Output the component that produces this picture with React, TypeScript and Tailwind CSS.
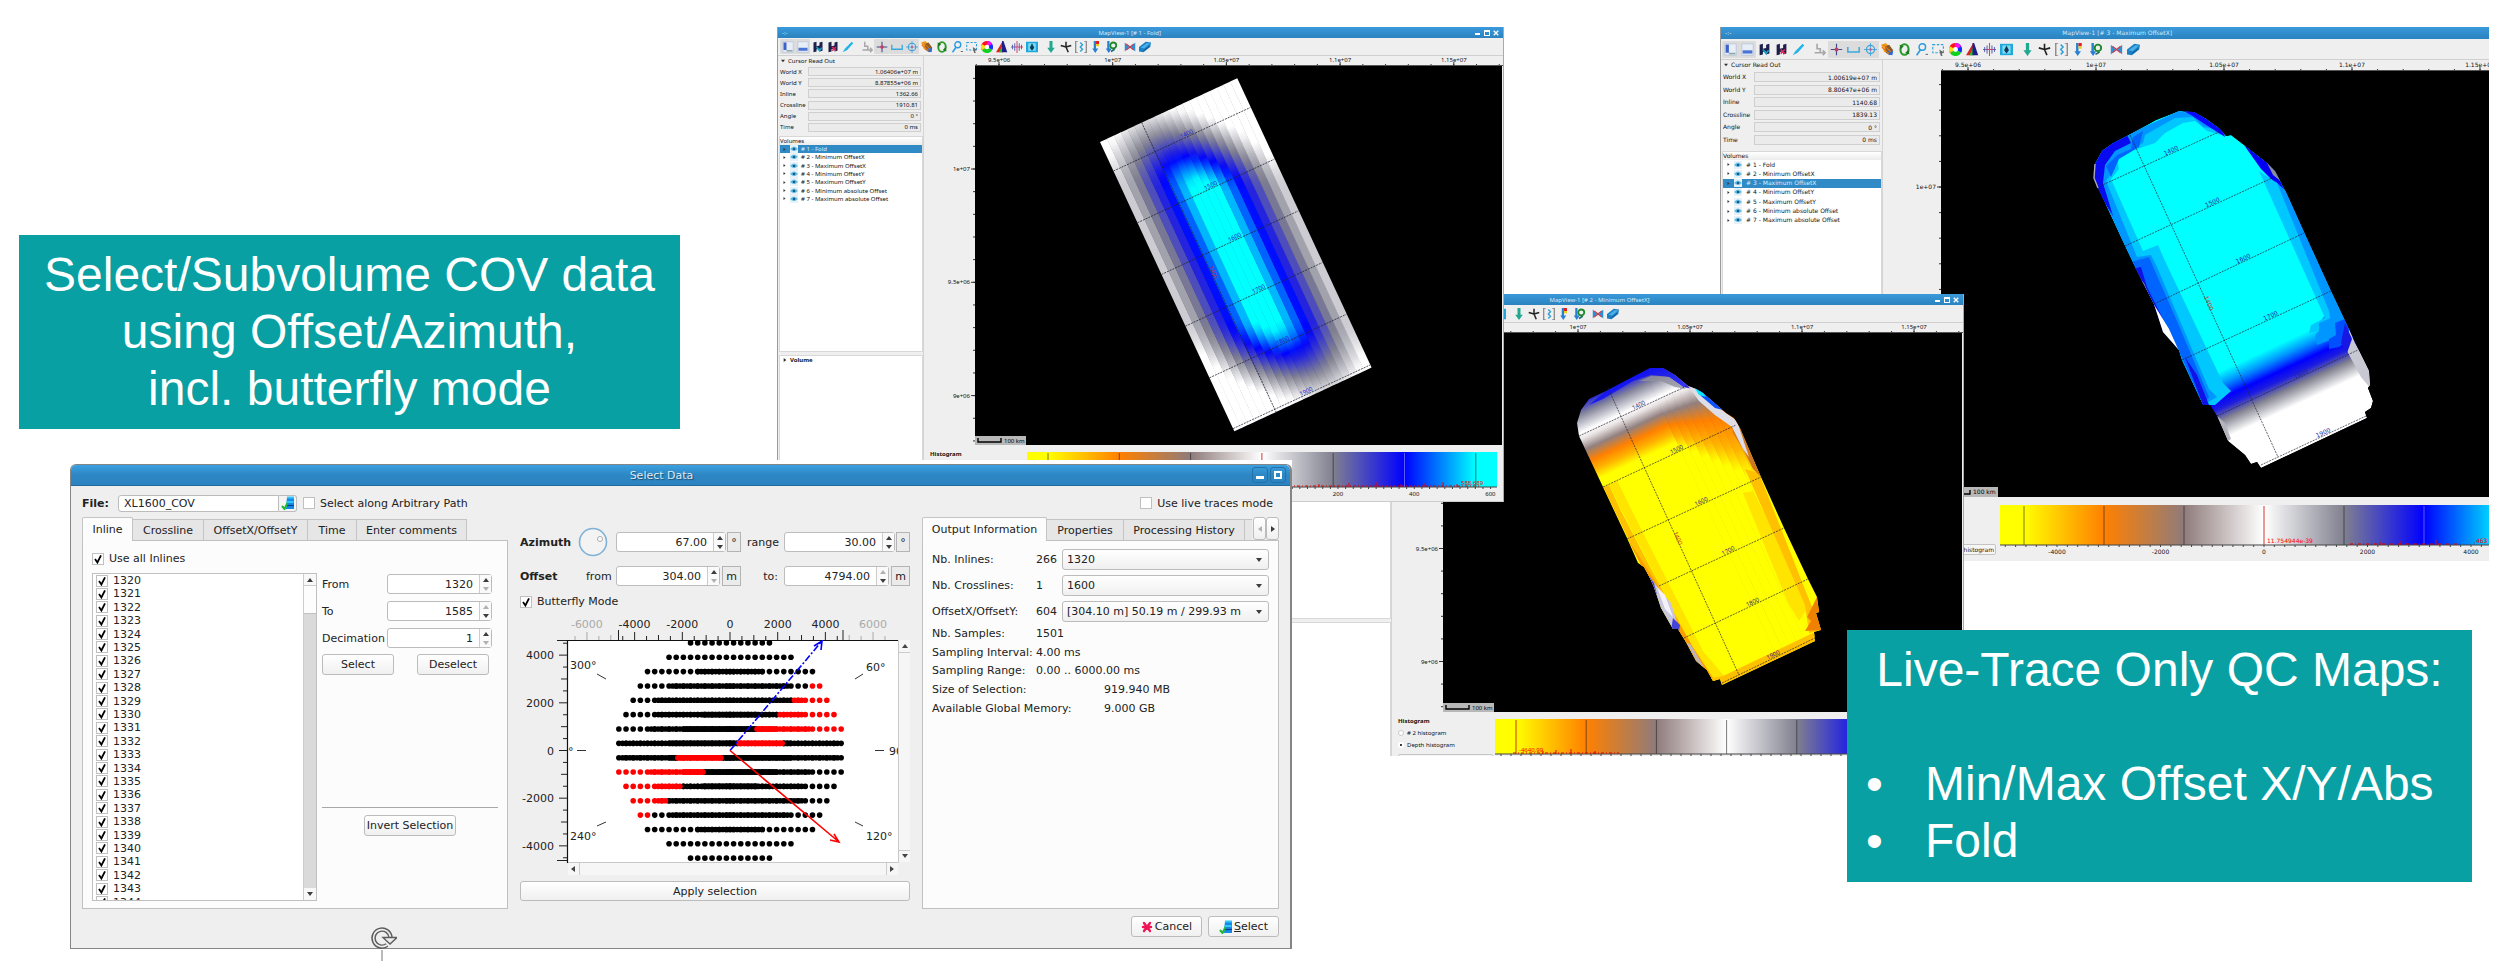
import { useId, type ReactNode } from "react";

/* ---------- colour scale shared by the maps and the histograms ---------- */

const scale = ["#ffff00", "#ff8000", "#8f7b7b", "#ffffff", "#80808f", "#0000ff", "#00ffff"];

function foldColor(value: number) {
  const stops = [
    [255, 255, 255],
    [128, 128, 143],
    [0, 0, 255],
    [0, 255, 255],
  ];
  const t = Math.max(0, Math.min(0.9999, value)) * 3;
  const i = Math.floor(t);
  const f = t - i;
  const c = stops[i].map((v, k) => Math.round(v + (stops[i + 1][k] - v) * f));
  return `rgb(${c.join(",")})`;
}

// fold falls off with the distance from a slanted segment down the middle
function foldValue(t: number, u: number) {
  const s = u - t * 36;
  const along = Math.max(0, 90 - s, s - 229) / 84;
  return 1.18 - 1.1 * Math.hypot(t, along);
}

/* ---------- toolbar ---------- */

const toolbarIcons: { name: string; pressed?: boolean; gap?: boolean; art: ReactNode }[] = [
  {
    name: "Left dock",
    pressed: true,
    art: (
      <>
        <path d="M1 1h14v14H1z" fill="#e8eef8" stroke="#b8c4d8" />
        <path d="M2 2h4v10H2z" fill="#3a62c8" />
        <path d="M6 13h8" stroke="#8aa" strokeWidth="2" />
      </>
    ),
  },
  {
    name: "Bottom dock",
    pressed: true,
    art: (
      <>
        <path d="M1 1h14v14H1z" fill="#e8eef8" stroke="#b8c4d8" />
        <path d="M2 9h12v4H2z" fill="#4a74d4" />
      </>
    ),
  },
  {
    name: "Save",
    art: (
      <>
        <path d="M2 2l4-1v6l4-1V2l4-1v12l-4 1v-4l-4 1v3l-4 1z" fill="#1c1f4a" />
        <path d="M6 8l4 5 3-4" stroke="#17a0c8" strokeWidth="2" fill="none" />
      </>
    ),
  },
  {
    name: "Save as",
    art: (
      <>
        <path d="M2 2l4-1v6l4-1V2l4-1v12l-4 1v-4l-4 1v3l-4 1z" fill="#1c1f4a" />
        <path d="M7 8l5 5M12 8l-5 5" stroke="#e0285a" strokeWidth="2" />
      </>
    ),
  },
  { name: "Edit", art: <path d="M1 15l3-5 9-9 2 2-8 9z" fill="#20b4e8" /> },
  {
    name: "Step",
    gap: true,
    art: <path d="M5 1v6h4v5h6M2 12h7M12 9l3 3-3 3" stroke="#a8a8a8" strokeWidth="2" fill="none" />,
  },
  {
    name: "Cross hair",
    pressed: true,
    art: (
      <>
        <path d="M8 1v14M1 8h14" stroke="#3a4a8a" strokeWidth="1.4" />
        <circle cx="8" cy="8" r="2.4" fill="#c83a6a" />
      </>
    ),
  },
  {
    name: "Scale bar",
    pressed: true,
    art: <path d="M1 5v6h14V5" stroke="#3aa8dc" strokeWidth="1.8" fill="none" />,
  },
  {
    name: "Target",
    pressed: true,
    art: (
      <>
        <circle cx="8" cy="8" r="5" stroke="#3aa0dc" strokeWidth="1.5" fill="none" />
        <path d="M8 0v16M0 8h16" stroke="#3aa0dc" />
        <circle cx="8" cy="8" r="1.5" fill="#c85a8a" />
      </>
    ),
  },
  {
    name: "Layers",
    art: (
      <>
        <path d="M0 2l6-2 6 6-3 6-5-1z" fill="#f0a020" />
        <path d="M5 4l5-2 5 7-4 6-5-3z" fill="#8a5a28" />
        <path d="M9 9l6 1-1 5-5-1z" fill="#2a6ad0" />
        <path d="M1 5l9 8M3 2l9 9" stroke="#e87818" strokeWidth="1.4" />
      </>
    ),
  },
  {
    name: "Refresh",
    art: (
      <>
        <ellipse cx="8" cy="8" rx="5" ry="6.5" stroke="#2a9a2a" strokeWidth="2.6" fill="none" />
        <path d="M2 2l5 2-4 4zM14 14l-5-2 4-4z" fill="#1c7a1c" />
      </>
    ),
  },
  {
    name: "Zoom",
    art: (
      <>
        <circle cx="9" cy="5" r="4" stroke="#2a9ae0" strokeWidth="1.8" fill="none" />
        <path d="M7 8l-5 7" stroke="#2a9ae0" strokeWidth="2" />
        <path d="M13 14h3" stroke="#444" />
      </>
    ),
  },
  {
    name: "Select area",
    art: (
      <>
        <path d="M1 2h13v10H1z" stroke="#2aa0d8" strokeWidth="1.4" strokeDasharray="3 2" fill="none" />
        <path d="M9 8l6 4-3 1 1 3-2 0-1-3z" fill="#666" />
      </>
    ),
  },
  {
    name: "Colours",
    art: (
      <>
        <path d="M8 8V0a8 8 0 0 1 7 12z" fill="#1030ff" />
        <path d="M8 8l7 4a8 8 0 0 1-14 0z" fill="#10d020" />
        <path d="M8 8L1 12A8 8 0 0 1 8 0z" fill="#ff1020" />
        <path d="M8 0a8 8 0 0 1 7 4L8 8z" fill="#f010f0" />
        <path d="M1 4a8 8 0 0 0 0 8l7-4z" fill="#f8e010" />
        <circle cx="8" cy="8" r="3" fill="#fff" />
      </>
    ),
  },
  {
    name: "Spectrum",
    art: (
      <>
        <path d="M0 15L9 0v15z" fill="#e02020" />
        <path d="M4 15l5-10v10z" fill="#20c020" />
        <path d="M8 15V0h2l5 15z" fill="#1c1c8a" />
      </>
    ),
  },
  {
    name: "Wavelet",
    art: (
      <>
        <path d="M8 0v16M0 8h16" stroke="#d04070" strokeWidth="1.3" />
        <path d="M2 5v6M5 3v10M11 3v10M14 5v6" stroke="#4a5ab0" strokeWidth="1.2" />
      </>
    ),
  },
  {
    name: "Snapshot",
    art: (
      <>
        <path d="M0 1h16v14H0z" fill="#20a8dc" />
        <path d="M3 3h10v10H3z" fill="#7adcf4" />
        <path d="M8 3l3 6-3 4-3-4z" fill="#103a5a" />
      </>
    ),
  },
  {
    name: "Load",
    gap: true,
    art: <path d="M6 0h4v9h3l-5 7-5-7h3z" fill="#22a890" />,
  },
  {
    name: "Axes",
    art: <path d="M8 1v7l-7-2M8 8l7-2M8 8l3 7" stroke="#222" strokeWidth="2" fill="none" />,
  },
  {
    name: "Window trace",
    art: (
      <>
        <path d="M4 0H1v16h3M12 0h3v16h-3" stroke="#444" fill="none" />
        <path d="M7 2l3 3-3 3 3 3-3 3" stroke="#2aa0d8" strokeWidth="1.8" fill="none" />
      </>
    ),
  },
  {
    name: "Colour arrow",
    art: (
      <>
        <path d="M5 0h3v10h3l-4 6-4-6h2z" fill="#2a80d0" />
        <path d="M8 0h4v4H8z" fill="#e02020" />
        <path d="M8 4h4v3H8z" fill="#e8d020" />
      </>
    ),
  },
  {
    name: "Apply arrow",
    art: (
      <>
        <path d="M3 0h3v10h3l-4 6-4-6h2z" fill="#2a80d0" />
        <circle cx="11" cy="6" r="4" stroke="#1c8a2a" strokeWidth="2.4" fill="none" />
        <path d="M8 14l5-3" stroke="#1c6a6a" strokeWidth="2" />
      </>
    ),
  },
  {
    name: "Mirror",
    gap: true,
    art: (
      <>
        <path d="M1 2l6 6-6 6zM15 2L9 8l6 6z" fill="#2a90d8" />
        <path d="M3 4l10 8M13 4L3 12" stroke="#c83a4a" strokeWidth="1.4" />
      </>
    ),
  },
  {
    name: "Volume",
    art: (
      <>
        <path d="M0 8l9-7 7 1-1 6-9 7-6-1z" fill="#1c80c4" />
        <path d="M2 9l8-6 5 0-8 7z" fill="#4ab0e8" />
        <path d="M6 13l8-6" stroke="#0c4a80" />
      </>
    ),
  },
];

function Toolbar({ large }: { large?: boolean }) {
  return (
    <div
      className={`flex items-center border-b border-[#d0d0d0] bg-[#efefef] ${large ? "h-[21px] pl-px" : "h-[18px] pl-[2px]"}`}
    >
      {toolbarIcons.map(({ name, pressed, gap, art }) => (
        <button
          key={name}
          type="button"
          aria-label={name}
          className={`flex shrink-0 items-center justify-center rounded-[1px] ${large ? "h-[17px] w-[17px]" : "h-[15px] w-[15px]"} ${gap ? "ml-1" : ""} ${pressed ? "bg-[#dcdcdc]" : ""}`}
        >
          <svg viewBox="0 0 16 16" className={large ? "size-[13px]" : "size-[12px]"}>
            {art}
          </svg>
        </button>
      ))}
    </div>
  );
}

/* ---------- map window ---------- */

const volumes = [
  "# 1 - Fold",
  "# 2 - Minimum OffsetX",
  "# 3 - Maximum OffsetX",
  "# 4 - Minimum OffsetY",
  "# 5 - Maximum OffsetY",
  "# 6 - Minimum absolute Offset",
  "# 7 - Maximum absolute Offset",
];

type Axis = { first: number; step: number; labels: string[] };

type MapWindowProps = {
  className: string;
  title: string;
  titleClass: string;
  readout: string[];
  selected: number;
  large?: boolean;
  buttons?: boolean;
  xAxis: Axis;
  yAxis: Axis;
  bar: { first: number; step: number; width: number; red: number; tick: number; axis: Axis; notes: { x: number; text: string }[]; spikes: number[] };
  sources?: string[];
  children: ReactNode;
};

function Ruler({ axis, height }: { axis: Axis; height: number }) {
  const ticks = Array.from({ length: 40 }, (_, i) => axis.first + ((i - 10) * axis.step) / 5).filter((x) => x > 0);
  return (
    <svg className="h-full w-full overflow-hidden">
      {ticks.map((x) => (
        <path key={x} d={`M${x} ${height - 2}V${height}`} stroke="#333" />
      ))}
      <path d={`M0 ${height - 0.5}H900`} stroke="#555" />
      {axis.labels.map((text, i) => (
        <g key={text}>
          <path d={`M${axis.first + i * axis.step} ${height - 4}V${height}`} stroke="#333" />
          <text x={axis.first + i * axis.step} y={height - 4} textAnchor="middle" fill="#111">
            {text}
          </text>
        </g>
      ))}
    </svg>
  );
}

function SideRuler({ axis, width }: { axis: Axis; width: number }) {
  const ticks = Array.from({ length: 30 }, (_, i) => axis.first + ((i - 15) * axis.step) / 5).filter((y) => y > 0);
  return (
    <svg className="h-full w-full overflow-hidden">
      {ticks.map((y) => (
        <path key={y} d={`M${width - 2} ${y}H${width}`} stroke="#333" />
      ))}
      {axis.labels.map((text, i) => (
        <g key={text}>
          <path d={`M${width - 4} ${axis.first + i * axis.step}H${width}`} stroke="#333" />
          <text x={width - 5} y={axis.first + i * axis.step + 2} textAnchor="end" fill="#111">
            {text}
          </text>
        </g>
      ))}
    </svg>
  );
}

function ColorBar({ bar, height }: { bar: MapWindowProps["bar"]; height: number }) {
  const id = useId();
  const lines = [0, 1, 2, 3, 4, 5, 6].map((i) => bar.first + i * bar.step);
  const ticks = Array.from({ length: 80 }, (_, i) => bar.axis.first + (i - 10) * bar.tick).filter(
    (x) => x > 0 && x < bar.width,
  );
  return (
    <svg className="h-full w-full overflow-hidden">
      <linearGradient id={id} gradientUnits="userSpaceOnUse" x1={lines[0]} x2={lines[6]} y1="0" y2="0">
        {scale.map((color, i) => (
          <stop key={color} offset={i / 6} stopColor={color} />
        ))}
      </linearGradient>
      <rect width={bar.width} height={height} fill={`url(#${id})`} />
      {lines.map((x, i) => (
        <path
          key={x}
          d={`M${x} 1V${height}`}
          stroke={i === bar.red ? "#c00" : i === 5 ? "#99f" : "#222"}
          strokeOpacity={i === bar.red ? 0.8 : 0.6}
        />
      ))}
      <path d={`M0 ${height}H${bar.width}`} stroke="#444" />
      <path d={bar.spikes.map((x, i) => `M${x} ${height}v${-3 - (i % 3)}`).join("")} stroke="#e00" fill="none" />
      <path
        d={`M${bar.spikes[0] - 30} ${height - 1}H${bar.spikes[bar.spikes.length - 1] + 24}`}
        stroke="#d00"
        strokeDasharray="3 2 1 2"
      />
      {ticks.map((x) => (
        <path key={x} d={`M${x} ${height}v2`} stroke="#444" />
      ))}
      {bar.axis.labels.map((text, i) => (
        <text key={text} x={bar.axis.first + i * bar.axis.step} y={height + 9} textAnchor="middle" fill="#111">
          {text}
        </text>
      ))}
      {bar.notes.map(({ x, text }) => (
        <text key={text} x={x} y={height - 2} fill="#f00">
          {text}
        </text>
      ))}
    </svg>
  );
}

function ScaleBar({ large }: { large?: boolean }) {
  return (
    <div
      className={`absolute bottom-0 left-0 flex items-center gap-[2px] bg-[#b8b8b8] pl-[2px] whitespace-nowrap text-black ${large ? "h-[10px] w-[57px]" : "h-[9px] w-[51px]"}`}
    >
      <svg className={`h-[5px] shrink-0 ${large ? "w-[28px]" : "w-[25px]"}`}>
        <path d={large ? "M1 0v4h26V0" : "M1 0v4h23V0"} stroke="#000" strokeWidth="1.4" fill="none" />
      </svg>
      100 km
    </div>
  );
}

function MapWindow(props: MapWindowProps) {
  const { large } = props;
  const fields = ["World X", "World Y", "Inline", "Crossline", "Angle", "Time"];
  return (
    <section
      className={`absolute flex flex-col overflow-hidden border-l border-[#9a9a9a] bg-[#efefef] leading-none text-[#111] ${large ? "font-['DejaVu_Sans',sans-serif] text-[6px]" : "font-['Noto_Sans',sans-serif] text-[6px]"} ${props.className}`}
    >
      <header
        className={`relative flex shrink-0 items-center bg-gradient-to-b from-[#3a9adb] to-[#2b82bf] text-[#d6e8f6] ${large ? "h-[12px]" : "h-[11px]"}`}
      >
        <span className="pl-1">-:-</span>
        <h2 className={`whitespace-nowrap ${props.titleClass}`}>{props.title}</h2>
        {props.buttons && (
          <div className="ml-auto flex gap-[2px] pr-[3px]">
            <button type="button" aria-label="Minimise" className="flex size-[7px] items-end pb-px">
              <span className="h-[2px] w-[5px] bg-white" />
            </button>
            <button type="button" aria-label="Maximise" className="size-[7px]">
              <span className="block size-[6px] border border-t-2 border-white" />
            </button>
            <button type="button" aria-label="Close" className="size-[7px]">
              <svg viewBox="0 0 8 8" className="size-[6px]">
                <path d="M1 1l6 6M7 1L1 7" stroke="#fff" strokeWidth="1.8" />
              </svg>
            </button>
          </div>
        )}
      </header>
      <Toolbar large={large} />
      <div className="flex min-h-0 flex-1">
        <aside className={`flex shrink-0 flex-col border-r border-[#d4d4d4] ${large ? "w-[162px]" : "w-[146px]"}`}>
          <h3 className="flex h-[10px] items-center gap-[3px] pl-[3px]">
            <svg viewBox="0 0 6 6" className="size-[4px]">
              <path d="M0 1h6L3 5z" fill="#333" />
            </svg>
            Cursor Read Out
          </h3>
          <div
            className={`flex shrink-0 flex-col justify-between pr-[2px] pl-[2px] ${large ? "mt-[2px] h-[73px]" : "mt-px h-[65px]"}`}
          >
            {fields.map((field, i) => (
              <label key={field} className="flex items-center">
                <span className={large ? "w-[31px]" : "w-[28px]"}>{field}</span>
                <input
                  readOnly
                  value={props.readout[i]}
                  className={`min-w-0 flex-1 border border-[#cfcfcf] bg-[#ebebeb] pr-[2px] text-right ${large ? "h-[10px]" : "h-[9px]"}`}
                />
              </label>
            ))}
          </div>
          <div
            className={`ml-px shrink-0 border border-[#d8d8d8] bg-white ${large ? "mt-[6px] h-[240px]" : "mt-[4px] h-[216px]"}`}
          >
            <h3 className="flex h-[8px] items-center bg-gradient-to-b from-white to-[#ececec]">Volumes</h3>
            <ul className={`grid auto-rows-fr ${large ? "h-[65px]" : "h-[58px]"}`}>
              {volumes.map((volume, i) => (
                <li
                  key={volume}
                  className={`flex items-center whitespace-nowrap ${i === props.selected ? "bg-[#2f8ac6] text-[#dfeefa]" : ""}`}
                >
                  <svg viewBox="0 0 6 6" className={`size-[3px] ${large ? "ml-[4px]" : "ml-[3px]"}`}>
                    <path d="M1 0v6l4-3z" fill="#333" />
                  </svg>
                  <svg viewBox="0 0 8 8" className={`ml-[4px] size-[8px] ${large ? "mr-[4px]" : "mr-[3px]"}`}>
                    <path d="M0 0h8v8H0z" fill="#e6f1f8" />
                    <path d="M0 4q4-5 8 0q-4 4-8 0z" fill="#63bfe6" />
                    <circle cx="4" cy="4" r="1.3" fill="#175a86" />
                  </svg>
                  {volume}
                </li>
              ))}
            </ul>
          </div>
          <div className="mt-[3px] ml-px min-h-0 flex-1 border border-b-0 border-[#d8d8d8] bg-white">
            <h3 className="flex items-center gap-[3px] pt-px pl-[3px] font-bold">
              <svg viewBox="0 0 6 6" className="size-[4px]">
                <path d="M1 0v6l4-3z" fill="#333" />
              </svg>
              Volume
            </h3>
          </div>
        </aside>
        <div className="flex min-w-0 flex-1 flex-col">
          <div className={`shrink-0 ${large ? "h-[11px] pl-[58px]" : "h-[10px] pl-[51px]"}`}>
            <Ruler axis={props.xAxis} height={large ? 11 : 10} />
          </div>
          <div className={`flex shrink-0 ${large ? "h-[426px]" : "h-[379px]"}`}>
            <div className={`shrink-0 ${large ? "w-[58px]" : "w-[51px]"}`}>
              <SideRuler axis={props.yAxis} width={large ? 58 : 51} />
            </div>
            <div className={`relative min-w-0 flex-1 bg-black ${large ? "" : "mr-px"}`}>
              <svg className="h-full w-full overflow-hidden">{props.children}</svg>
              <ScaleBar large={large} />
            </div>
          </div>
          <div className="flex min-h-0 flex-1 overflow-hidden">
            <fieldset
              className={`flex shrink-0 flex-col pl-[6px] ${large ? "w-[117px] gap-[6px] pt-[8px] pr-[4px]" : "w-[103px] gap-[6px] pt-[6px] pr-[2px]"}`}
            >
              <legend className="sr-only">Histogram source</legend>
              <strong>Histogram</strong>
              {props.sources?.map((name, i) => (
                <label key={name} className="flex items-center gap-[3px]">
                  <input
                    type="radio"
                    name={props.title}
                    defaultChecked={i === 1}
                    className="size-[6px] appearance-none rounded-full border border-[#ccc] bg-white checked:border-2 checked:border-white checked:bg-black"
                  />
                  {name}
                </label>
              ))}
              {!props.sources && large && (
                <button
                  type="button"
                  className="mt-[27px] h-[11px] shrink-0 rounded-[2px] border border-[#c4c4c4] bg-[#f6f6f6] pr-px text-right whitespace-nowrap"
                >
                  Volume specific histogram
                </button>
              )}
              {props.sources && (
                <button
                  type="button"
                  className="h-[11px] shrink-0 rounded-[2px] border border-[#c4c4c4] bg-[#f6f6f6] whitespace-nowrap"
                >
                  Set as Volume specific histogram
                </button>
              )}
            </fieldset>
            <div className={`min-w-0 flex-1 ${large ? "pt-[8px]" : "pt-[7px]"}`}>
              <ColorBar bar={props.bar} height={large ? 40 : 35} />
            </div>
          </div>
        </div>
      </div>
    </section>
  );
}

/* ---------- the three maps ---------- */

const inlineNames = ["1400", "1500", "1600", "1700", "1800", "1900"];

function FoldMap() {
  const cols = Array.from({ length: 20 }, (_, i) => i);
  const rows = Array.from({ length: 40 }, (_, i) => i / 39);
  const lines = [32, 89, 146, 203, 260, 316];
  return (
    <g transform="translate(125 76) rotate(-24.9)">
      {cols.map((c) => (
        <g key={c}>
          <linearGradient id={`fold-${c}`} x1="0" x2="0" y1="0" y2="1">
            {rows.map((r) => (
              <stop key={r} offset={r} stopColor={foldColor(foldValue((c + 0.5) / 10 - 1, r * 319))} />
            ))}
          </linearGradient>
          <rect x={c * 7.55} width="7.9" height="319" fill={`url(#fold-${c})`} />
        </g>
      ))}
      <g stroke="#223" strokeWidth="0.7" strokeDasharray="2 1">
        {lines.map((y) => (
          <path key={y} d={`M0 ${y}H151`} />
        ))}
        <path d="M46 0V319" />
      </g>
      {lines.map((y, i) => (
        <text key={y} x="82" y={y - 1} textAnchor="middle" fill="#22c">
          {inlineNames[i]}
        </text>
      ))}
      <text transform="translate(46 166) rotate(90)" textAnchor="middle" fill="#c02040">
        1400
      </text>
    </g>
  );
}

type GridProps = { lines: number[][]; long: string; red: number[]; color: string; at: number };

function MapGrid({ lines, long, red, color, at }: GridProps) {
  return (
    <>
      <g stroke="#223" strokeWidth="0.7" strokeDasharray="2 1">
        {lines.map(([x1, y1, x2, y2]) => (
          <path key={y1} d={`M${x1} ${y1}L${x2} ${y2}`} />
        ))}
        <path d={long} />
      </g>
      {lines.map(([x1, y1, x2, y2], i) => (
        <text
          key={y1}
          transform={`translate(${x1 + (x2 - x1) * at} ${y1 + (y2 - y1) * at - 1}) rotate(-25)`}
          textAnchor="middle"
          fill={color}
        >
          {inlineNames[i]}
        </text>
      ))}
      <text transform={`translate(${red[0]} ${red[1]}) rotate(66)`} textAnchor="middle" fill="#d03018">
        1400
      </text>
    </>
  );
}

// columns run along the inline direction; the yellow onset steps down to the right
const minimumColumns = [0, 8, 16, 25, 34, 43, 52, 61, 70, 79];

function MinimumMap() {
  const outline =
    "M207 35L220 35L232 42L245 53L253 56L260 60L274 72L283 80L291 85L297 95L318 144L341 195L365 246L374 264L376 279L373 280L378 297L371 299L372 308L279 352L277 346L270 348L264 337L253 328L243 309L235 296L230 296L218 275L211 254L207 245L201 234L195 230L184 205L160 154L136 103L134 90L138 77L146 66L163 58Z";
  const stopsFor = (shift: number): [number, string][] => [
    [-38, "#0000ff"],
    [-30, "#2424dc"],
    [-19, "#83839a"],
    [-2, "#ffffff"],
    [4, "#eae4e4"],
    [15 + shift * 0.1, "#928080"],
    [27 + shift * 0.3, "#ff8000"],
    [37 + shift * 0.7, "#ffb400"],
    [47 + shift, "#ffff00"],
  ];
  return (
    <>
      <clipPath id="min-clip">
        <path d={outline} />
      </clipPath>
      <g clipPath="url(#min-clip)">
        <g transform="translate(136 103) rotate(-25)">
          {minimumColumns.map((shift, i) => {
            const x = i === 0 ? -20 : 78 + i * 8;
            return (
              <g key={shift}>
                <linearGradient id={`min-${i}`} gradientUnits="userSpaceOnUse" x1="0" x2="0" y1="-38" y2="132">
                  {stopsFor(shift).map(([u, color]) => (
                    <stop key={color} offset={(u + 38) / 170} stopColor={color} />
                  ))}
                </linearGradient>
                <rect x={x} y="-60" width={i === 0 ? 106.5 : 8.5} height="360" fill={`url(#min-${i})`} />
              </g>
            );
          })}
        </g>
        <path d="M146 72L163 58L207 35L222 34L250 56L240 54L226 44L208 42L190 48L160 66Z" fill="#1010f4" fillOpacity="0.85" />
        <path d="M208 43L226 44L243 56L232 54L218 48L196 48Z" fill="#90909e" fillOpacity="0.8" />
        <path d="M300 160L310 158L368 270L356 288L345 270Z" fill="#ffe400" />
        <path d="M302 136L316 140L378 297L366 300L362 272Z" fill="#ffc000" />
        <path d="M160 154L166 152L178 178L206 232L252 318L270 348L240 310L200 236Z" fill="#ffc000" />
        <path d="M166 152L174 147L190 180L260 318L282 344L268 346L236 288L190 200Z" fill="#ffe400" />
        <path d="M184 205L190 214L212 248L236 290L250 314L272 348L264 346L230 290L200 236Z" fill="#ff9c00" />
        <path d="M264 346L280 343L372 299L378 306L279 352Z" fill="#ffc000" />
        <path d="M378 297L362 298L368 288L364 284L370 272L374 264L378 280Z" fill="#f08000" />
        <path d="M288 84L297 95L318 144L310 136L300 116L290 100Z" fill="#d07820" />
        <path d="M243 50L260 60L280 78L294 88L306 124L300 116L289 94L272 82L256 68Z" fill="#dedee8" />
        <path d="M253 54L262 60L280 77L272 75L258 63Z" fill="#0a50ff" />
        <path d="M251 54L259 58L263 64L256 62Z" fill="#00e8ff" />
        <path d="M206 243L216 256L228 270L236 296L228 298L216 274Z" fill="#c9c7dd" />
        <path d="M214 254L222 262L230 284L222 276Z" fill="#f4f2f8" />
        <path d="M230 285L237 292L236 298L228 297Z" fill="#4444d8" />
        <path d="M206 243L211 250L214 262L208 254Z" fill="#3c3ce0" />
        <path d="M243 309L248 312L262 336L254 329Z" fill="#bdb4bb" />
      </g>
      <MapGrid
        lines={[
          [136, 103, 244, 53],
          [160, 154, 293, 92],
          [184, 206, 318, 144],
          [216, 253, 341, 195],
          [241, 305, 365, 246],
          [279, 350, 372, 305],
        ]}
        long="M165 55L296 342"
        red={[233, 206]}
        color="#332a70"
        at={0.56}
      />
    </>
  );
}

function MaximumMap() {
  const outline =
    "M238 40L253 41L264 47L278 57L285 65L290 64L307 77L325 91L334 100L345 121L363 161L390 220L416 275L428 300L429 314L427 317L432 330L430 337L424 341L426 347L320 397L316 391L310 393L304 384L287 370L276 345L269 334L262 334L241 289L238 279L222 261L213 233L195 198L184 175L157 117L153 107L154 93L161 80L172 72L186 65L215 49Z";
  return (
    <>
      <linearGradient id="max-fill" gradientUnits="userSpaceOnUse" x1="163.8" y1="353.7" x2="197.4" y2="426.3">
        <stop offset="0" stopColor="#00ffff" />
        <stop offset="0.08" stopColor="#00c8ff" />
        <stop offset="0.15" stopColor="#0096ff" />
        <stop offset="0.23" stopColor="#0050ff" />
        <stop offset="0.31" stopColor="#0000ff" />
        <stop offset="0.42" stopColor="#1c1ce0" />
        <stop offset="0.56" stopColor="#80808f" />
        <stop offset="0.78" stopColor="#ffffff" />
      </linearGradient>
      <clipPath id="max-clip">
        <path d={outline} />
      </clipPath>
      <g clipPath="url(#max-clip)">
        <path d={outline} fill="url(#max-fill)" />
        <path d="M153 107L153 93L162 78L190 62L238 40L262 46L284 62L280 64L266 60L254 50L242 52L224 62L214 72L190 80L176 88L178 98L170 108L202 180L217 174L224 190L282 312L290 320L274 334L262 334L184 175Z" fill="#00c8ff" />
        <path d="M153 107L153 93L162 78L190 62L238 40L262 46L276 58L262 56L252 46L234 47L204 64L202 72L172 88L174 98L165 110L196 186L210 184L216 196L268 318L276 326L262 334L184 175Z" fill="#0096ff" />
        <path d="M186 192L208 186L214 200L236 250L268 326L262 334L238 280Z" fill="#0064ff" />
        <path d="M150 110L152 90L166 74L186 64L190 72L174 80L164 94L162 112L172 145Z" fill="#0a0af0" />
        <path d="M165 95L176 84L190 78L192 66L202 60L198 76L178 88L170 106Z" fill="#0064ff" />
        <path d="M238 38L254 40L282 60L284 66L262 52L250 44Z" fill="#0808ff" />
        <path d="M192 198L200 196L206 216L240 284L238 280L222 261Z" fill="#1010e8" />
        <path d="M196 204L201 210L212 232L228 258L238 280L222 263L210 236Z" fill="#fff" />
        <path d="M198 208L203 212L214 238L208 232Z" fill="#8a86a0" />
        <path d="M303 74L325 91L334 100L348 128L338 116L320 98Z" fill="#0000f4" />
        <path d="M324 88L336 102L342 112L332 104Z" fill="#8c8c9c" />
        <path d="M334 110L346 121L402 242L406 254L394 250L390 256L378 252L384 244Z" fill="#0096ff" />
        <path d="M318 100L336 112L388 240L390 250L378 252L378 260L368 262L370 254L384 247Z" fill="#00c8ff" />
        <path d="M378 252L392 246L404 252L406 262L392 268L376 274L374 264L378 260Z" fill="#0096ff" />
        <path d="M394 252L404 248L412 266L398 276L388 278L388 268L395 264Z" fill="#0050ff" />
        <path d="M408 258L414 272L430 302L430 318L420 306L406 280Z" fill="#c8c8d2" />
        <path d="M404 252L411 268L406 282L400 272Z" fill="#1818e4" />
        <path d="M262 334L268 334L256 304L244 286Z" fill="#1010e8" />
        <path d="M276 345L284 352L290 368L287 370Z" fill="#b4b4be" />
      </g>
      <path d="M154 93L153 107L157 117" stroke="#a8a8b8" strokeWidth="1.4" fill="none" />
      <MapGrid
        lines={[
          [157, 116, 280, 60],
          [184, 175, 331, 107],
          [213, 233, 363, 162],
          [241, 289, 390, 220],
          [276, 345, 417, 279],
          [320, 394, 425, 345],
        ]}
        long="M189 64L337 386"
        red={[266, 233]}
        color="#2222a8"
        at={0.6}
      />
    </>
  );
}

/* ---------- dialog controls ---------- */

function Check({ children, checked, className = "" }: { children: ReactNode; checked?: boolean; className?: string }) {
  return (
    <label className={`flex items-center gap-[5px] ${className}`}>
      <span className="grid size-[12px] shrink-0 place-items-center">
        <input
          type="checkbox"
          defaultChecked={checked}
          className="peer col-start-1 row-start-1 size-[12px] appearance-none border border-[#c0c0c0] bg-white"
        />
        <svg viewBox="0 0 12 12" className="pointer-events-none invisible col-start-1 row-start-1 size-[12px] peer-checked:visible">
          <path d="M3 6l2.4 3.4L9 2.4" stroke="#000" strokeWidth="1.8" fill="none" />
        </svg>
      </span>
      {children}
    </label>
  );
}

function Arrow({ dir, off }: { dir: "up" | "down" | "left" | "right"; off?: boolean }) {
  const d = { up: "M0 5h6L3 1z", down: "M0 1h6L3 5z", left: "M5 0v6L1 3z", right: "M1 0v6l4-3z" }[dir];
  return (
    <svg viewBox="0 0 6 6" className="size-[6px]">
      <path d={d} fill={off ? "#b0b0b0" : "#3c3c3c"} />
    </svg>
  );
}

function Spin({ id, label, value, upOff, downOff }: { id?: string; label?: string; value: string; upOff?: boolean; downOff?: boolean }) {
  return (
    <div className="flex h-5 min-w-0 flex-1 rounded-[3px] border border-[#bcbcbc] bg-white">
      <input id={id} aria-label={label} defaultValue={value} className="min-w-0 flex-1 bg-transparent pr-[6px] text-right" />
      <div className="flex w-[12px] flex-col border-l border-[#ccc] bg-[#fafafa]">
        <button type="button" aria-label="Increase" className="flex flex-1 items-center justify-center">
          <Arrow dir="up" off={upOff} />
        </button>
        <button type="button" aria-label="Decrease" className="flex flex-1 items-center justify-center">
          <Arrow dir="down" off={downOff} />
        </button>
      </div>
    </div>
  );
}

function Unit({ children, className }: { children: ReactNode; className: string }) {
  return (
    <span className={`flex h-5 items-center justify-center border border-[#b4b4b4] bg-[#ebebeb] ${className}`}>
      {children}
    </span>
  );
}

const buttonClass =
  "flex items-center justify-center rounded-[3px] border border-[#bcbcbc] bg-gradient-to-b from-white to-[#f0f0f0] whitespace-nowrap";

function DatabaseIcon() {
  return (
    <svg viewBox="0 0 14 14" className="size-[14px] shrink-0">
      <path d="M6 1h7v12H5z" fill="#1489e8" />
      <path d="M6 1.500h7M5.500 6h7" stroke="#33c8f8" strokeWidth="1.8" />
      <path d="M6 9.500h7" stroke="#0a3c9a" strokeWidth="1.2" />
      <path d="M1 10l2.500 3 3-6" stroke="#1fb82f" strokeWidth="2" fill="none" />
    </svg>
  );
}

function Tabs({ names, widths }: { names: string[]; widths: string[] }) {
  return (
    <div role="tablist" className="flex h-[24px] items-end">
      {names.map((name, i) => (
        <button
          key={name}
          type="button"
          role="tab"
          aria-selected={i === 0}
          className={`border border-[#c4c4c4] whitespace-nowrap ${widths[i]} ${i === 0 ? "z-10 h-[24px] rounded-t-[2px] border-b-0 bg-[#fcfcfc]" : "h-[22px] border-l-0 bg-[#e6e6e6]"}`}
        >
          {name}
        </button>
      ))}
    </div>
  );
}

/* ---------- offset / azimuth plot ---------- */

const dotRows = [
  { extent: 115, dense: 115, core: 60 },
  { extent: 115, dense: 84, core: 46 },
  { extent: 108, dense: 77, core: 28 },
  { extent: 101, dense: 77, core: 0 },
  { extent: 94, dense: 63, core: 0 },
  { extent: 87, dense: 34, core: 0 },
  { extent: 65, dense: 0, core: 0 },
  { extent: 44, dense: 0, core: 0 },
];

// start and end of the selected part of each row, mirrored for the lower half
const selectedRanges = [
  [9, 53],
  [26, 200],
  [48, 200],
  [62, 200],
  [80, 200],
];

function rowDots({ extent, dense, core }: (typeof dotRows)[number]) {
  const xs: number[] = [];
  for (let x = 3.6; x <= extent; x += 7.17) xs.push(x);
  for (let x = 0; x < dense * 0.95; x += 3.58) xs.push(x);
  for (let x = 0; x < core; x += 1.8) xs.push(x);
  return xs.flatMap((x) => [x, -x]);
}

function OffsetPlot() {
  const cx = 210;
  const cy = 142.5;
  const xTicks = Array.from({ length: 27 }, (_, i) => i - 13);
  const yTicks = Array.from({ length: 19 }, (_, i) => i - 9);
  return (
    <svg viewBox="0 0 390 268" className="h-[268px] w-full" fontSize="11" fill="#222">
      {xTicks.map((i) => (
        <path
          key={i}
          d={`M${cx + i * 11.92} ${i % 4 === 0 ? 24 : i % 2 === 0 ? 27 : 28}V32`}
          stroke={Math.abs(i) > 9 ? "#aaa" : "#222"}
        />
      ))}
      <path d="M98.500 22V32M323 22V32" stroke="#222" />
      {yTicks.map((i) => (
        <path key={i} d={`M${i % 4 === 0 ? 39 : i % 2 === 0 ? 41 : 43} ${cy + i * 11.92}H47`} stroke="#222" />
      ))}
      <path d="M37 32.500H47M37 252.500H47" stroke="#222" />
      {[-6000, -4000, -2000, 0, 2000, 4000, 6000].map((v) => (
        <text key={v} x={cx + v * 0.02385} y="20" textAnchor="middle" fill={Math.abs(v) > 5000 ? "#aaa" : "#222"}>
          {v}
        </text>
      ))}
      {[4000, 2000, 0, -2000, -4000].map((v) => (
        <text key={v} x="34" y={cy - v * 0.02385 + 4} textAnchor="end">
          {v}
        </text>
      ))}
      <clipPath id="plot-clip">
        <path d="M48 32H378V254H48z" />
      </clipPath>
      <path d="M47.500 32.500H378.500V254.500H47.500z" fill="#fff" stroke="#c8c8c8" />
      <path d="M47.500 255V32.500H378" fill="none" stroke="#111" strokeWidth="1.2" />
      <g clipPath="url(#plot-clip)">
        {dotRows.flatMap((row, r) =>
          [-1, 1].flatMap((side) =>
            rowDots(row)
              .map((x) => {
                const range = selectedRanges[r];
                const d = -side * x;
                return { x, red: range !== undefined && d >= range[0] && d <= range[1] };
              })
              .sort((a, b) => Number(a.red) - Number(b.red))
              .map(({ x, red }, i) => (
                <circle
                  key={`${r}${side}${i}`}
                  cx={cx + x}
                  cy={cy + side * (r + 0.5) * 14.35}
                  r="2.8"
                  fill={red ? "#f00" : "#000"}
                />
              )),
          ),
        )}
        <g stroke="#00f" strokeWidth="1.6" fill="none">
          <path d={`M${cx} ${cy}L302 33`} strokeDasharray="7 2 2 2" />
          <path d="M301 42L302 33L294 38" />
        </g>
        <path d={`M${cx} ${cy}L319 234M314 226L319 234L310 232`} stroke="#f00" strokeWidth="1.6" fill="none" />
        <path
          d="M77 66L86 71M335 71L343 66M77 218L86 214M335 214L343 218M57 142.500H66M355 142.500H364"
          stroke="#333"
          fill="none"
        />
        <text x="50" y="61">300°</text>
        <text x="346" y="63">60°</text>
        <text x="50" y="232">240°</text>
        <text x="346" y="232">120°</text>
        <text x="48" y="147">°</text>
        <text x="369" y="147">90°</text>
      </g>
      <path d="M379 32h12v222h-12zM48 255h330v12H48z" fill="#f6f6f6" />
      <path d="M379 44.500h11M379 242.500h11M59.500 255v12M366.500 255v12" stroke="#ccc" />
      <path d="M382 40h6l-3-4zM382 246h6l-3 4zM55 258v6l-4-3zM370 258v6l4-3z" fill="#444" />
    </svg>
  );
}

/* ---------- dialog ---------- */

const inlines = Array.from({ length: 25 }, (_, i) => 1320 + i);

function InlinePanel() {
  return (
    <div className="flex w-[426px] shrink-0 flex-col">
      <Tabs
        names={["Inline", "Crossline", "OffsetX/OffsetY", "Time", "Enter comments"]}
        widths={["w-[51px]", "w-[71px]", "w-[104px]", "w-[49px]", "w-[110px]"]}
      />
      <div className="-mt-px flex flex-1 flex-col border border-[#c0c0c0] bg-[#fcfcfc] px-[9px] pt-[11px]">
        <Check checked>Use all Inlines</Check>
        <div className="mt-[8px] flex">
          <div className="flex h-[328px] w-[225px] border border-[#c0c0c0] bg-white">
            <div className="min-w-0 flex-1 overflow-hidden">
              <ul className="grid h-[335px] auto-rows-fr">
                {inlines.map((inline) => (
                  <li key={inline} className="pl-[3px]">
                    <Check checked>{inline}</Check>
                  </li>
                ))}
              </ul>
            </div>
            <div className="flex w-[13px] flex-col border-l border-[#ccc] bg-[#dadada]">
              <span className="flex h-[12px] items-center justify-center border-b border-[#ccc] bg-[#f8f8f8]">
                <Arrow dir="up" />
              </span>
              <span className="h-[28px] border-b border-[#c0c0c0] bg-[#fdfdfd]" />
              <span className="mt-auto flex h-[12px] items-center justify-center bg-[#f8f8f8]">
                <Arrow dir="down" />
              </span>
            </div>
          </div>
          <div className="ml-[5px] flex w-[176px] flex-col pt-px">
            <div className="grid grid-cols-[65px_105px] items-center gap-y-[7px]">
              <label htmlFor="inline-from">From</label>
              <Spin id="inline-from" value="1320" downOff />
              <label htmlFor="inline-to">To</label>
              <Spin id="inline-to" value="1585" upOff />
              <label htmlFor="inline-step">Decimation</label>
              <Spin id="inline-step" value="1" downOff />
            </div>
            <div className="mt-[6px] flex gap-[23px]">
              <button type="button" className={`h-[21px] w-[72px] ${buttonClass}`}>
                Select
              </button>
              <button type="button" className={`h-[21px] w-[72px] ${buttonClass}`}>
                Deselect
              </button>
            </div>
            <hr className="mt-[132px] border-[#a8a8a8]" />
            <button type="button" className={`mx-auto mt-[7px] h-[21px] w-[92px] ${buttonClass}`}>
              Invert Selection
            </button>
          </div>
        </div>
      </div>
    </div>
  );
}

function AzimuthPanel() {
  return (
    <div className="flex w-[390px] shrink-0 flex-col">
      <div className="mt-[15px] flex h-5 items-center">
        <strong className="w-[58px]">Azimuth</strong>
        <svg viewBox="0 0 30 30" className="-my-1 size-[30px]">
          <circle cx="15" cy="15" r="13.500" fill="#f3f3f3" stroke="#7eb2d6" strokeWidth="1.6" />
          <circle cx="22" cy="12" r="2.500" fill="#fff" stroke="#aaa" />
        </svg>
        <div className="ml-[8px] flex w-[125px] gap-px">
          <Spin label="Azimuth" value="67.00" />
          <Unit className="w-[14px]">°</Unit>
        </div>
        <span className="w-[43px] pl-[6px]">range</span>
        <div className="flex w-[126px] gap-px">
          <Spin label="Azimuth range" value="30.00" />
          <Unit className="w-[14px]">°</Unit>
        </div>
      </div>
      <div className="mt-[14px] flex h-5 items-center">
        <strong className="w-[66px]">Offset</strong>
        <span className="w-[30px]">from</span>
        <div className="flex w-[125px] gap-[2px]">
          <Spin label="Offset from" value="304.00" downOff />
          <Unit className="w-[19px]">m</Unit>
        </div>
        <span className="w-[43px] pr-[6px] text-right">to:</span>
        <div className="flex w-[126px] gap-[2px]">
          <Spin label="Offset to" value="4794.00" upOff />
          <Unit className="w-[19px]">m</Unit>
        </div>
      </div>
      <Check checked className="mt-[9px] h-[13px]">
        Butterfly Mode
      </Check>
      <OffsetPlot />
      <button type="button" className={`mt-[5px] h-5 ${buttonClass}`}>
        Apply selection
      </button>
    </div>
  );
}

const counts = [
  ["Nb. Inlines:", "266", "1320"],
  ["Nb. Crosslines:", "1", "1600"],
  ["OffsetX/OffsetY:", "604", "[304.10 m] 50.19 m / 299.93 m"],
];

const facts = [
  ["Nb. Samples:", "1501", "w-[104px]"],
  ["Sampling Interval:", "4.00 ms", "w-[104px]"],
  ["Sampling Range:", "0.00 .. 6000.00 ms", "w-[104px]"],
  ["Size of Selection:", "919.940 MB", "w-[172px]"],
  ["Available Global Memory:", "9.000 GB", "w-[172px]"],
];

function OutputPanel() {
  return (
    <div className="flex min-w-0 flex-1 flex-col">
      <div className="flex items-start">
        <Tabs
          names={["Output Information", "Properties", "Processing History", ""]}
          widths={["w-[125px]", "w-[77px]", "w-[121px]", "w-[7px] border-r-0"]}
        />
        <div className="ml-auto flex h-[23px]">
          <button type="button" aria-label="Scroll tabs left" className={`w-[13px] ${buttonClass}`}>
            <Arrow dir="left" off />
          </button>
          <button type="button" aria-label="Scroll tabs right" className={`w-[13px] ${buttonClass}`}>
            <Arrow dir="right" />
          </button>
        </div>
      </div>
      <div className="-mt-px flex-1 border border-[#c0c0c0] bg-[#fcfcfc] pt-[8px] pr-[9px] pl-[9px]">
        {counts.map(([name, count, value]) => (
          <label key={name} className="mb-[5px] flex h-[21px] items-center">
            <span className="w-[104px]">{name}</span>
            <span className="w-[26px]">{count}</span>
            <span className="grid h-full min-w-0 flex-1 items-center">
              <select className={`col-start-1 row-start-1 h-full w-full appearance-none pl-[4px] text-[#222] ${buttonClass}`}>
                <option>{value}</option>
              </select>
              <span className="pointer-events-none col-start-1 row-start-1 mr-[7px] justify-self-end">
                <Arrow dir="down" />
              </span>
            </span>
          </label>
        ))}
        <dl className="-mt-[3px] grid h-[94px] auto-rows-fr">
          {facts.map(([name, value, width]) => (
            <div key={name} className="flex items-center whitespace-nowrap">
              <dt className={width}>{name}</dt>
              <dd>{value}</dd>
            </div>
          ))}
        </dl>
      </div>
    </div>
  );
}

function SelectDialog() {
  return (
    <div className="absolute top-[460px] left-[70px] w-[1222px] bg-white pt-1">
      <section
        role="dialog"
        aria-label="Select Data"
        className="rounded-t-[6px] border border-r-2 border-[#858585] bg-[#efefef] font-['DejaVu_Sans',sans-serif] text-[11px] leading-[13px] text-[#222]"
      >
        <header className="flex h-[21px] items-center rounded-t-[5px] border-b border-[#246a9c] bg-gradient-to-b from-[#3ba0e0] via-[#2d87c4] to-[#2b84c0] pr-[4px]">
          <h2 className="flex-1 text-center text-[#dcebf6] [text-shadow:1px_1px_1px_#1a4a70]">Select Data</h2>
          <div className="flex gap-[2px]">
            <button
              type="button"
              aria-label="Minimise"
              className="flex size-[16px] items-end justify-center rounded-[3px] border border-[#2470a8] pb-[3px]"
            >
              <span className="h-[3px] w-[8px] bg-white" />
            </button>
            <button
              type="button"
              aria-label="Maximise"
              className="flex size-[16px] items-center justify-center rounded-[3px] border border-[#2470a8]"
            >
              <span className="size-[8px] border-2 border-white" />
            </button>
          </div>
        </header>
        <div className="px-[11px] pb-[11px]">
          <div className="flex h-[26px] items-center pt-[8px]">
            <label htmlFor="file" className="w-[36px] font-bold">
              File:
            </label>
            <input
              id="file"
              defaultValue="XL1600_COV"
              className="h-[17px] w-[161px] rounded-l-[3px] border border-[#bcbcbc] bg-white pl-[5px]"
            />
            <button
              type="button"
              aria-label="Choose file"
              className="flex h-[17px] w-[18px] items-center justify-center rounded-r-[3px] border border-l-0 border-[#bcbcbc] bg-[#f4f4f4]"
            >
              <DatabaseIcon />
            </button>
            <Check className="ml-[6px]">Select along Arbitrary Path</Check>
            <Check className="mr-[6px] ml-auto">Use live traces mode</Check>
          </div>
          <div className="mt-[5px] flex h-[392px] gap-[12px]">
            <InlinePanel />
            <AzimuthPanel />
            <OutputPanel />
          </div>
          <div className="mt-[7px] flex justify-end gap-[6px]">
            <button type="button" className={`h-[21px] w-[71px] gap-[2px] ${buttonClass}`}>
              <svg viewBox="0 0 12 12" className="size-[12px]">
                <path d="M3 2l6 8M9 2L3 10M2 6h8" stroke="#f01458" strokeWidth="2.4" strokeLinecap="round" />
              </svg>
              Cancel
            </button>
            <button type="button" className={`h-[21px] w-[71px] gap-px ${buttonClass}`}>
              <DatabaseIcon />
              <span>
                <u>S</u>elect
              </span>
            </button>
          </div>
        </div>
      </section>
    </div>
  );
}

function RotateHandle() {
  return (
    <svg viewBox="0 0 30 36" className="absolute top-[926px] left-[367px] h-[36px] w-[30px]">
      <path d="M15 24V35" stroke="#777" />
      <path d="M20 19A8.500 8.500 0 1 1 23.500 11.500" stroke="#5c5c5c" strokeWidth="4.500" fill="none" />
      <path d="M20 19A8.500 8.500 0 1 1 23.500 11.500" stroke="#efefef" strokeWidth="1.600" fill="none" />
      <path d="M16 11.500H30L23 18z" fill="#efefef" stroke="#5c5c5c" strokeWidth="1.400" />
    </svg>
  );
}

/* ---------- page ---------- */

export default function App() {
  return (
    <main className="relative min-h-screen w-full overflow-hidden bg-white">
      <MapWindow
        className="top-[27px] left-[1720px] h-[534px] w-[769px]"
        title="MapView-1 [# 3 - Maximum OffsetX]"
        titleClass="ml-[331px]"
        readout={["1.00619e+07 m", "8.80647e+06 m", "1140.68", "1839.13", "0 °", "0 ms"]}
        selected={2}
        large
        xAxis={{ first: 27, step: 128, labels: ["9.5e+06", "1e+07", "1.05e+07", "1.1e+07", "1.15e+07"] }}
        yAxis={{ first: 116, step: 128, labels: ["1e+07"] }}
        bar={{
          first: 24,
          step: 80,
          width: 500,
          red: 3,
          tick: 10.35,
          axis: { first: 57, step: 103.5, labels: ["-4000", "-2000", "0", "2000", "4000"] },
          notes: [
            { x: 267, text: "11.754944e-39" },
            { x: 474, text: ",463" },
          ],
          spikes: [380, 400, 436],
        }}
      >
        <MaximumMap />
      </MapWindow>

      <MapWindow
        className="top-[294px] left-[1245px] h-[462px] w-[719px] border-r border-r-[#aaa]"
        title="MapView-1 [# 2 - Minimum OffsetX]"
        titleClass="ml-[294px]"
        readout={["1.06406e+07 m", "8.87855e+06 m", "1362.66", "1910.81", "0 °", "0 ms"]}
        selected={1}
        buttons
        xAxis={{ first: 23, step: 112, labels: ["9.5e+06", "1e+07", "1.05e+07", "1.1e+07", "1.15e+07"] }}
        yAxis={{ first: 102.5, step: 113, labels: ["1e+07", "9.5e+06", "9e+06"] }}
        bar={{
          first: 21,
          step: 70.2,
          width: 463,
          red: 0,
          tick: 10,
          axis: { first: 46, step: 92, labels: [] },
          notes: [{ x: 24, text: "-4640.99" }],
          spikes: [48, 61, 76, 100],
        }}
        sources={["# 2 histogram", "Depth histogram"]}
      >
        <MinimumMap />
      </MapWindow>

      <MapWindow
        className="top-[27px] left-[777px] h-[475px] w-[727px] border-r border-b border-r-[#aaa] border-b-[#ccc]"
        title="MapView-1 [# 1 - Fold]"
        titleClass="ml-[311px]"
        readout={["1.06406e+07 m", "8.87855e+06 m", "1362.66", "1910.81", "0 °", "0 ms"]}
        selected={0}
        buttons
        xAxis={{ first: 24, step: 113.7, labels: ["9.5e+06", "1e+07", "1.05e+07", "1.1e+07", "1.15e+07"] }}
        yAxis={{ first: 103, step: 113.3, labels: ["1e+07", "9.5e+06", "9e+06"] }}
        bar={{
          first: 21,
          step: 71.3,
          width: 470,
          red: 3,
          tick: 7.63,
          axis: { first: 311, step: 76.2, labels: ["200", "400", "600"] },
          notes: [{ x: 434, text: "588.689" }],
          spikes: [292, 322, 350, 374, 397, 416, 430],
        }}
      >
        <FoldMap />
      </MapWindow>

      <SelectDialog />
      <RotateHandle />

      <p className="absolute top-[235px] left-[19px] w-[661px] bg-[#08a0a2] pt-[11px] pb-[12px] text-center font-['Liberation_Sans',Arial,sans-serif] text-[48px] leading-[57px] text-white">
        Select/Subvolume COV data
        <br />
        using Offset/Azimuth,
        <br />
        incl. butterfly mode
      </p>

      <div className="absolute top-[630px] left-[1847px] w-[625px] bg-[#08a0a2] px-[19px] pt-[11px] pb-[13px] font-['Liberation_Sans',Arial,sans-serif] text-[48px] leading-[57px] text-white">
        <h1 className="text-center">Live-Trace Only QC Maps:</h1>
        <ul className="mt-[57px]">
          {["Min/Max Offset X/Y/Abs", "Fold"].map((item) => (
            <li key={item} className="flex whitespace-nowrap">
              <span className="w-[59px] shrink-0">•</span>
              {item}
            </li>
          ))}
        </ul>
      </div>
    </main>
  );
}
